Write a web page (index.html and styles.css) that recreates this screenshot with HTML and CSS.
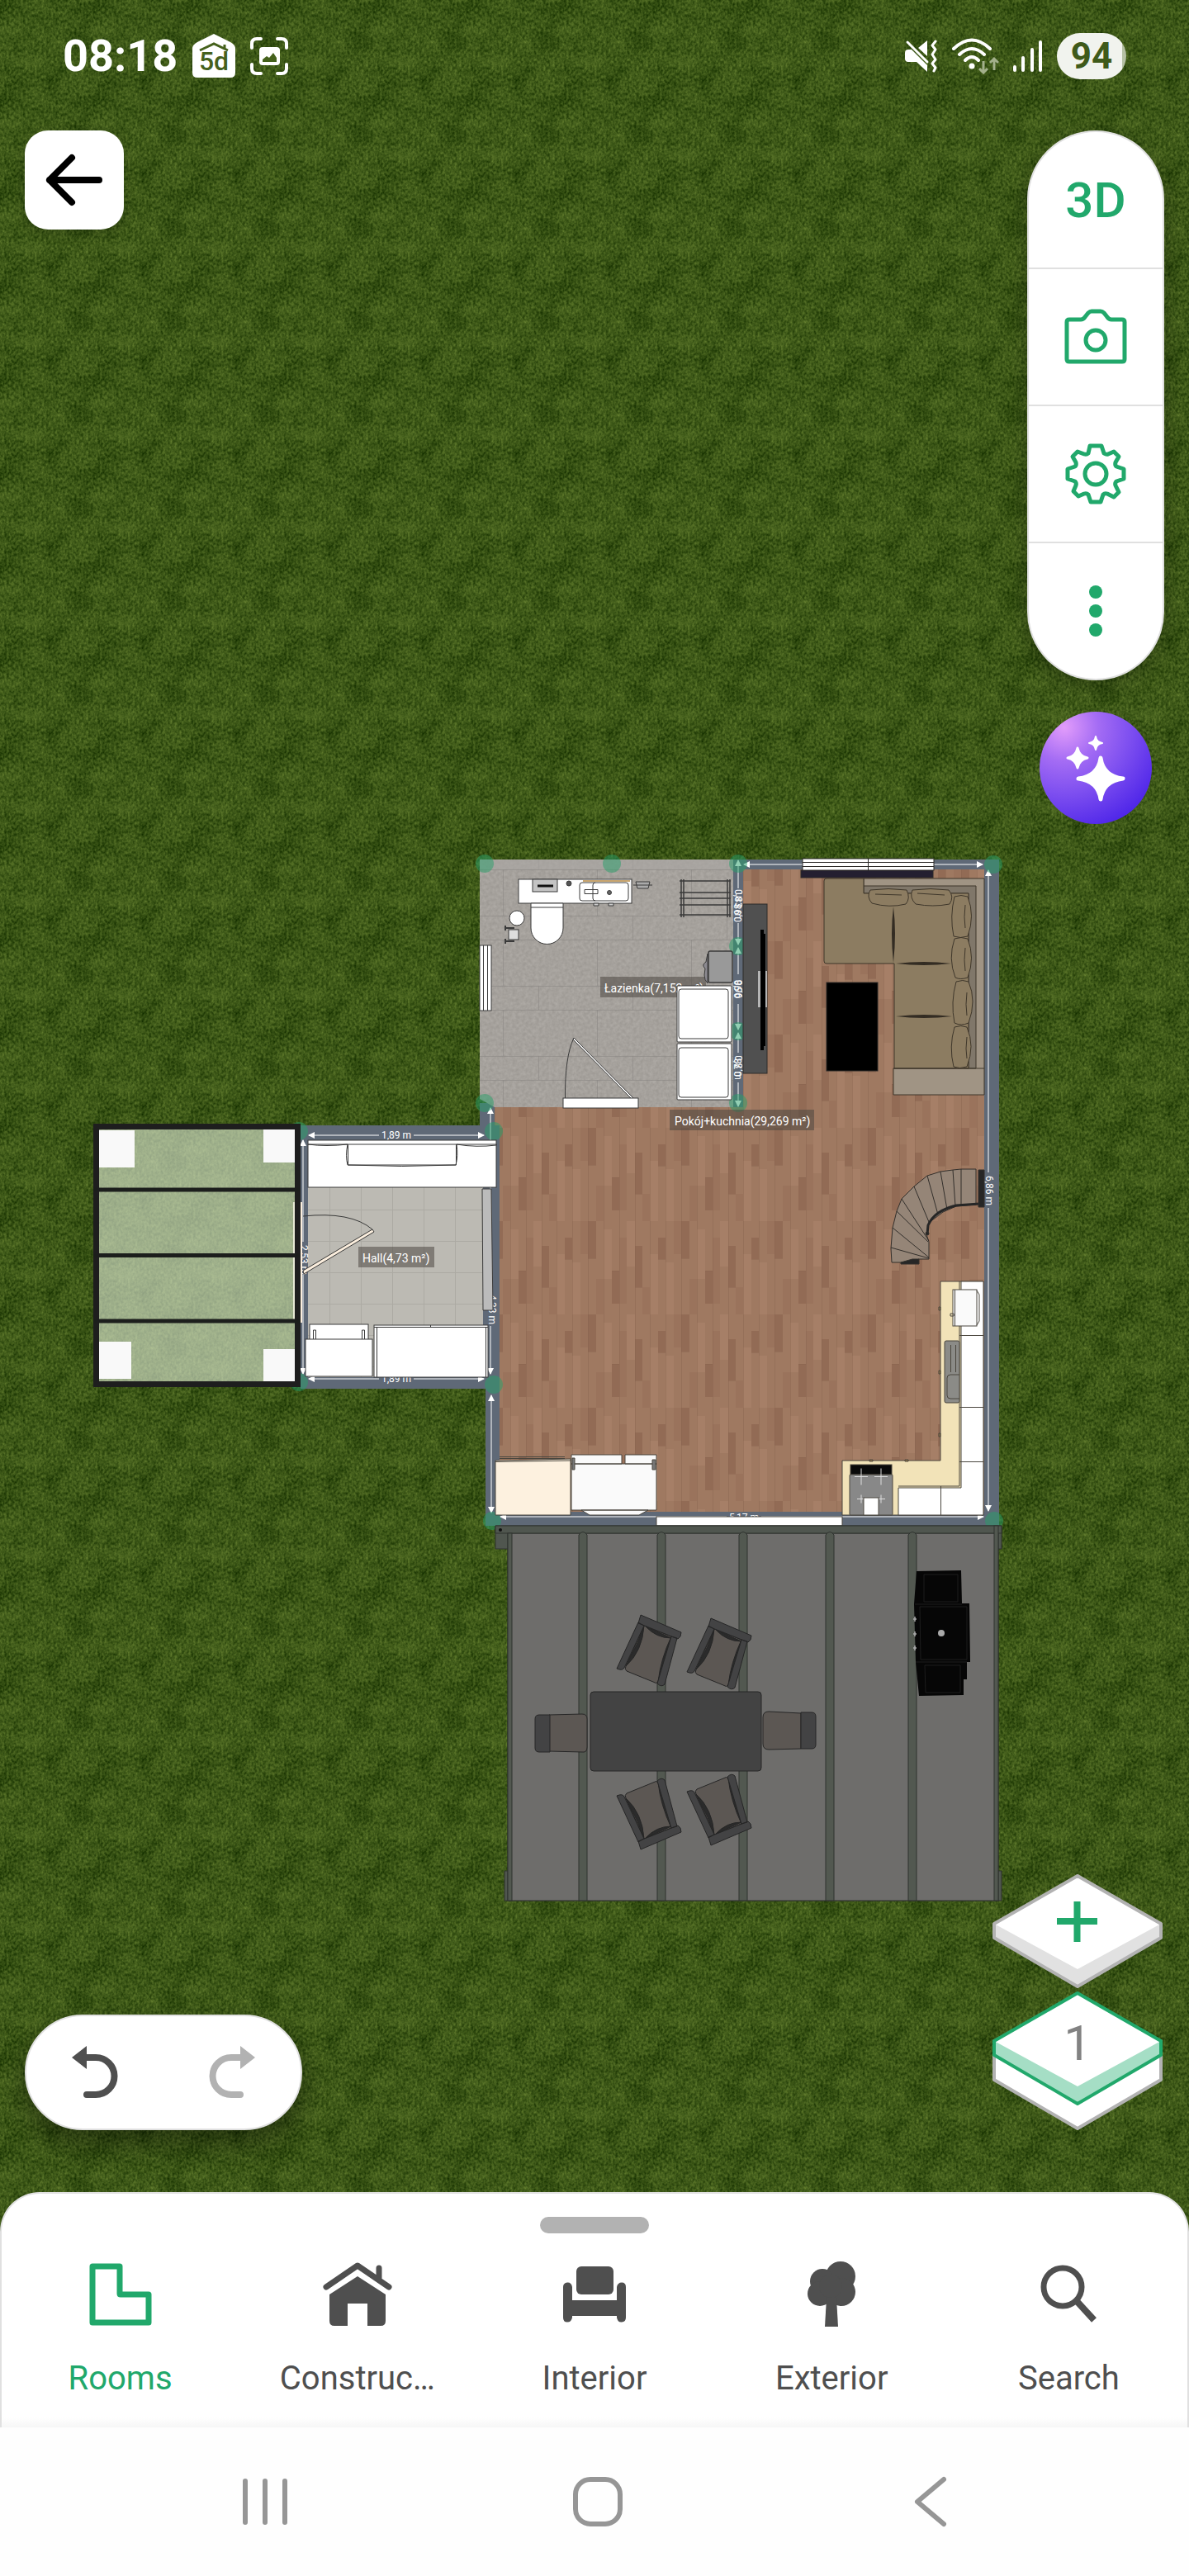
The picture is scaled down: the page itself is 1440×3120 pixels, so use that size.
FILE: index.html
```html
<!DOCTYPE html>
<html lang="en">
<head>
  <meta charset="UTF-8">
  <meta name="viewport" content="width=device-width, initial-scale=1.0">
  <title>Floor plan editor</title>
  <link rel="stylesheet" href="styles.css">
</head>
<body>

  <main class="editor">
    <svg class="plan" viewBox="0 0 1440 2703" preserveAspectRatio="xMidYMin slice" xmlns="http://www.w3.org/2000/svg">
      <defs>
        <filter id="grassNoise" x="0" y="0" width="100%" height="100%" color-interpolation-filters="sRGB">
          <feTurbulence type="fractalNoise" baseFrequency="0.35 0.28" numOctaves="2" seed="4" stitchTiles="stitch"/>
          <feColorMatrix values="1 0 0 0 0  1 0 0 0 0  1 0 0 0 0  0 0 0 0 1" result="fine"/>
          <feTurbulence type="fractalNoise" baseFrequency="0.036" numOctaves="3" seed="9" stitchTiles="stitch"/>
          <feColorMatrix values="1 0 0 0 0  1 0 0 0 0  1 0 0 0 0  0 0 0 0 1" result="coarse"/>
          <feComposite in="fine" in2="coarse" operator="arithmetic" k2="0.65" k3="0.35"/>
          <feColorMatrix values="0.5 0 0 0 -0.015  0.5 0 0 0 0.09  0.3 0 0 0 -0.06  0 0 0 0 1"/>
        </filter>
        <filter id="stoneNoise" x="0" y="0" width="100%" height="100%" color-interpolation-filters="sRGB">
          <feTurbulence type="fractalNoise" baseFrequency="0.25" numOctaves="2" seed="2"/>
          <feColorMatrix values="0.1 0 0 0 0.598  0.1 0 0 0 0.582  0.1 0 0 0 0.562  0 0 0 0 1"/>
        </filter>
        <pattern id="grass" width="113" height="113" patternUnits="userSpaceOnUse">
          <rect width="113" height="113" filter="url(#grassNoise)"/>
        </pattern>
        <pattern id="stone" x="581" y="1053" width="114" height="85" patternUnits="userSpaceOnUse">
          <rect width="114" height="85" filter="url(#stoneNoise)"/>
          <path d="M0 .5H114M0 56.5H114M28.5 0V56M71.5 56V85" stroke="#8c8884" stroke-width=".6" fill="none"/>
        </pattern>
        <pattern id="wood" x="6" y="10" width="113" height="113" patternUnits="userSpaceOnUse">
          <rect width="113" height="113" fill="#9f7961"/>
          <path d="M0 20h9v26H0zM28 0h10v45H28zM57 60h9v40h-9zM85 30h9v50h-9z" fill="#926b55"/>
          <path d="M9 50h10v63H9zM47 10h10v60H47zM75 0h10v55H75zM103 40h10v73h-10z" fill="#a67f67"/>
          <path d="M19 0h9v40h-9zM66 20h9v80h-9zM38 70h9v43h-9zM94 80h9v33h-9z" fill="#9a735c"/>
          <path d="M9.500 0V113M28.500 0V113M47.500 0V113M66.500 0V113M85.500 0V113M103.500 0V113M0 46.500H9M28 45.500H38M57 60.500H66M85 80.500H94" stroke="#84604c" stroke-width=".6" fill="none" opacity=".6"/>
        </pattern>
        <pattern id="tile" x="399" y="1465" width="38" height="38" patternUnits="userSpaceOnUse">
          <rect width="38" height="38" fill="#bcbab3"/>
          <path d="M0 .5H38M.5 0V38" stroke="#acaaa3" fill="none"/>
        </pattern>
        <marker id="arrow" viewBox="0 0 8 8" refX="7" refY="4" markerWidth="8" markerHeight="8" markerUnits="userSpaceOnUse" orient="auto-start-reverse">
          <path d="M0 0L8 4L0 8z" fill="#fff"/>
        </marker>
        <g id="chair">
          <path d="M780 1969L813 1982L797 2037Q795 2040 791 2037L759 2024Q756 2022 758 2018z" fill="#5c5753"/>
          <path d="M780 1969Q778 2000 758 2018L772 1990zM813 1982Q800 2010 797 2037L807 2010zM782 1970L813 1984Q795 1984 782 1970z" fill="#2b2b2b"/>
          <path d="M773 1965L780 1969L756 2020Q754 2024 747 2021zM813 1982L820 1984L805 2040Q801 2044 796 2039zM776 1956L825 1977Q825 1983 821 1985L773 1966z" fill="#434344"/>
        </g>
      </defs>

      <rect width="1440" height="2703" fill="url(#grass)"/>

      <!-- Walls -->
      <path d="M888 1041H1210V1848H588V1682H364V1363H581V1336H888z" fill="#5f6977"/>

      <!-- Floors -->
      <path d="M599 1341H900V1053H1192V1831H605V1363H599z" fill="url(#wood)"/>
      <path d="M581 1041H888V1341H599L581 1331z" fill="url(#stone)"/>
      <rect x="581" y="1041" width="307" height="12" fill="#aaa7a3" opacity=".6"/>
      <rect x="373" y="1382" width="212" height="286" fill="url(#tile)"/>
      <rect x="888" y="1053" width="12" height="288" fill="#5f6977"/>

      <!-- Dimensions -->
      <g class="dimension" marker-start="url(#arrow)" marker-end="url(#arrow)">
        <path d="M901 1047H1190"/>
        <path d="M1197 1054V1830"/>
        <path d="M594 1342V1664"/>
        <path d="M595 1690V1832"/>
        <path d="M606 1837H1191"/>
        <path d="M374 1375H586"/>
        <path d="M374 1670H586"/>
        <path d="M367 1381V1664"/>
        <path d="M894 1042V1144"/>
        <path d="M894 1148V1247"/>
        <path d="M894 1251V1340"/>
      </g>
      <g fill="#5f6977">
        <rect x="459" y="1369" width="42" height="11"/>
        <rect x="459" y="1669" width="42" height="6"/>
        <rect x="1192" y="1420" width="12" height="43"/>
        <rect x="362" y="1504" width="10" height="40"/>
        <rect x="590" y="1568" width="11" height="38"/>
        <rect x="889" y="1076" width="10" height="42"/>
        <rect x="889" y="1180" width="10" height="36"/>
        <rect x="889" y="1275" width="10" height="36"/>
        <rect x="880" y="1832" width="42" height="5"/>
      </g>
      <g class="dimension-text">
        <text x="480" y="1379">1,89 m</text>
        <text x="480" y="1674">1,89 m</text>
        <text x="901" y="1842">5,17 m</text>
        <text transform="translate(1194 1442) rotate(90)">6,86 m</text>
        <text transform="translate(364 1526) rotate(90)">2,53 m</text>
        <text transform="translate(592 1586) rotate(90)">4,33 m</text>
        <text transform="translate(890 1095) rotate(90)">0,83 m</text>
        <text transform="translate(898 1099) rotate(-90)">0,98 m</text>
        <text transform="translate(890 1198) rotate(90)">0,96</text>
        <text transform="translate(898 1198) rotate(-90)">0,98</text>
        <text transform="translate(890 1293) rotate(90)">0,8 m</text>
        <text transform="translate(898 1293) rotate(-90)">0,78</text>
      </g>

      <!-- Corner handles -->
      <g fill="#28a06a" opacity=".5">
        <circle cx="587" cy="1046" r="11"/>
        <circle cx="741" cy="1046" r="11"/>
        <circle cx="894" cy="1046" r="11"/>
        <circle cx="894" cy="1146" r="11"/>
        <circle cx="894" cy="1249" r="11"/>
        <circle cx="894" cy="1336" r="11"/>
        <circle cx="587" cy="1336" r="11"/>
        <circle cx="598" cy="1370" r="11"/>
        <circle cx="1203" cy="1047" r="11"/>
        <circle cx="1204" cy="1842" r="11"/>
        <circle cx="596" cy="1842" r="11"/>
        <circle cx="362" cy="1370" r="11"/>
        <circle cx="362" cy="1674" r="11"/>
        <circle cx="598" cy="1677" r="11"/>
      </g>

      <!-- Room names -->
      <g fill="#4d4742" opacity=".55">
        <rect x="727" y="1183" width="128" height="25"/>
        <rect x="811" y="1344" width="175" height="25"/>
        <rect x="434" y="1510" width="92" height="25"/>
      </g>
      <g class="room-name">
        <text x="732" y="1202">Łazienka(7,152 m²)</text>
        <text x="817" y="1363">Pokój+kuchnia(29,269 m²)</text>
        <text x="439" y="1529">Hall(4,73 m²)</text>
      </g>

      <!-- Bathroom -->
      <g stroke="#3a3a3a" fill="#fff">
        <rect x="628" y="1065" width="137" height="29"/>
        <rect x="645" y="1065" width="30" height="15" fill="#c4c4c4"/>
        <path d="M651 1073H670" stroke="#111" stroke-width="3"/>
        <rect x="702" y="1069" width="59" height="22" rx="3"/>
        <path d="M721 1069q-3 0-3 3v16q0 3 3 3M708 1077.500h16v5h-16z" fill="none"/>
        <circle cx="738" cy="1081" r="2.500" fill="#666"/>
        <circle cx="689" cy="1070" r="3" fill="#555"/>
        <rect x="706" y="1066" width="57" height="2" fill="#c8a56e" stroke="none"/>
        <path d="M719 1094h6v3h-6zM737 1094h6v3h-6z" fill="#ccc"/>
        <path d="M643 1094h39v30a19.500 19.500 0 0 1-39 0z"/>
        <path d="M643 1099H682"/>
        <circle cx="626" cy="1112" r="9"/>
        <path d="M612 1121v6m0-3h11M612 1137v6m0-3h11" stroke-width="2"/>
        <rect x="616" y="1126" width="12" height="12" fill="#ddd"/>
        <path d="M767 1072H790M770 1068h17l-2 8h-13z" fill="#aaa"/>
        <path d="M823 1067H885M823 1081H885M823 1088H885M823 1096H885M823 1108H885M825 1065V1111M828 1065V1111M881 1065V1111M884 1065V1111" stroke-width="1.500"/>
        <path d="M857 1155l-2 10q-6 4-1 8l-1 8q0 6 4 10z" fill="#8c8a90"/>
        <rect x="858" y="1152" width="29" height="38" rx="2" fill="#999" stroke-width="1.500"/>
        <rect x="820" y="1194" width="66" height="68" rx="1"/>
        <rect x="822" y="1198" width="60" height="60" rx="3"/>
        <rect x="820" y="1264" width="66" height="68" rx="1"/>
        <rect x="822" y="1269" width="60" height="60" rx="3"/>
        <rect x="581" y="1145" width="14" height="79"/>
        <path d="M585.500 1145V1224M590.500 1145V1224"/>
        <path d="M684.500 1330Q684 1280 695 1257" fill="none"/>
        <path d="M695 1257L767 1330l-2 1L694 1259z"/>
        <rect x="682" y="1330" width="91" height="12"/>
      </g>

      <!-- Living room -->
      <g stroke="#2c2a28">
        <rect x="970" y="1054" width="160" height="9" fill="#241f30"/>
        <rect x="972" y="1040" width="159" height="14" fill="#fff"/>
        <path d="M972 1044.500H1131M972 1049.500H1131M1051.500 1040V1054"/>
        <rect x="900" y="1095" width="29" height="205" fill="#505050"/>
        <rect x="918" y="1176" width="11" height="44" fill="#b5b5b5" stroke="none"/>
        <path d="M921 1126h4v5h2v136h-2v5h-4z" fill="#000" stroke="none"/>
        <rect x="1001" y="1190" width="62" height="107" fill="#000"/>
        <g stroke="#3f372b">
          <path d="M1046 1064H1192V1326H1082V1294H1173V1082H1046z" fill="#a09484"/>
          <path d="M1046 1073H1182V1294H1173V1082H1046z" fill="#80776a"/>
          <path d="M1001 1064H1046V1082H1173V1294H1083V1167H1001q-3 0-3-3V1067q0-3 3-3z" fill="#8c7c61"/>
          <path d="M1082 1294H1192"/>
          <g fill="#8c7c61">
            <path d="M1054 1078q22-3 44 0q5 10-1 17q-20 5-41-1q-7-8-2-16z"/>
            <path d="M1105 1078q22-3 44 0q7 8 1 17q-20 4-41 0q-8-8-4-17z"/>
            <path d="M1156 1086q8-3 16 0q9 23 0 48q-9 3-17 0q-5-24 1-48z"/>
            <path d="M1156 1137q8-3 16 0q9 23 0 47q-9 3-15 0q-9-23-1-47z"/>
            <path d="M1158 1189q8-3 15 0q10 23 0 50q-9 4-17 0q-5-25 2-50z"/>
            <path d="M1156 1244q8-3 15 0q10 23 0 48q-9 3-16 0q-6-24 1-48z"/>
          </g>
          <path d="M1060 1083L1092 1084M1111 1082L1144 1084M1169 1096q-2 15 0 28M1169 1148q-2 15 0 28M1171 1202q-2 15 0 28M1171 1256q-2 15 0 26" fill="none"/>
        </g>
        <path d="M1082 1098q4 32 0 68q-4-36 0-68zM1085 1167q34-4 67 0q-33 4-67 0zM1085 1231q34-4 68 0q-34 4-68 0z" fill="#332c23" stroke="none"/>
      </g>

      <!-- Staircase -->
      <g stroke="#332f2b" fill="#958577">
        <path d="M1182 1416L1164 1416L1154 1417L1139 1419L1123 1424L1107 1437L1092 1452L1086 1467L1081 1487L1079 1512L1080 1529H1101L1113 1525H1125V1504L1122 1495L1125 1481L1142 1468L1158 1461L1182 1459z"/>
        <path d="M1164 1416V1460M1154 1417L1157 1461M1139 1419L1147 1465M1123 1424L1136 1471M1107 1437L1125 1480M1092 1452L1125 1503M1086 1467L1124 1504M1081 1487L1125 1523M1079 1511L1125 1524" fill="none"/>
        <path d="M1186 1458L1158 1460Q1132 1466 1124 1484L1123 1495" fill="none" stroke="#262626" stroke-width="3"/>
        <path d="M1185 1417h7v45h-7zM1091 1529l14-4h8v6h-22z" fill="#262626"/>
        <circle cx="1123" cy="1494" r="2" fill="#262626"/>
      </g>

      <!-- Kitchen -->
      <g stroke="#4a463e">
        <path d="M1139 1552H1191V1835H1020V1769H1139z" fill="#f2e3b8"/>
        <path d="M1164 1552H1191V1835H1088V1802H1164z" fill="#fff"/>
        <path d="M1162 1552V1800H1088M1162 1617.500H1191M1162 1704.500H1191M1162 1770.500H1191M1139.500 1800V1835" fill="none"/>
        <rect x="1154" y="1562" width="29" height="44" fill="#fafafa"/>
        <path d="M1183 1563l3 5v32l-3 5M1156.500 1562V1606M1151 1591h4v3h-4z" fill="none"/>
        <rect x="1144" y="1624" width="18" height="75" rx="2" fill="#8b8b87"/>
        <path d="M1151.500 1629V1662M1157.500 1629V1662M1162 1665h-11q-4 0-4 4v21q0 4 4 4h11" fill="none"/>
        <rect x="1030" y="1774" width="50" height="12" fill="#0a0a0a"/>
        <rect x="1029" y="1786" width="52" height="49" rx="1" fill="#888"/>
        <path d="M1035 1788.500h16m-8-10v20M1059 1788.500h16m-8-10v20M1038 1815.500h10m-5-5v10M1062 1815.500h10m-5-5v10" stroke="#ddd"/>
        <rect x="1046" y="1814" width="18" height="21" fill="#fff"/>
        <path d="M1137 1583h2v4h-2zM1137 1660h2v4h-2zM1137 1736h2v4h-2zM1053 1768h4v2h-4zM1096 1768h4v2h-4z" fill="#9b7a48"/>
        <path d="M605 1764.500H684M605 1766.500H684" fill="none"/>
        <path d="M600 1769L691 1767V1835H600z" fill="#fdf1df"/>
        <path d="M600 1770.500L691 1769" fill="none"/>
        <path d="M692 1762H753V1773H692zM757 1762H795V1773H757zM692 1773H795V1829H692zM704 1829H785L774 1835H714z" fill="#fafafa"/>
        <path d="M693 1766h3v14h-3zM790 1768h4v12h-4z" fill="#777"/>
        <rect x="795" y="1837" width="225" height="11" fill="#fff"/>
      </g>

      <!-- Hall -->
      <g stroke="#3a3a3a" fill="#fff">
        <rect x="373" y="1381" width="228" height="57"/>
        <path d="M373 1386H601V1387Q577 1390 553 1386Q555 1400 552 1411Q487 1414 421 1411Q418 1400 421 1386Q395 1389 373 1386"/>
        <path d="M421.500 1386V1411H552.500V1386" fill="none"/>
        <path d="M584 1440H595L597 1587H585z" fill="#bbb"/>
        <rect x="375" y="1604" width="71" height="19"/>
        <path d="M379.500 1611h3v12h-3zM438.500 1611h3v12h-3z"/>
        <rect x="370" y="1622" width="81" height="45"/>
        <rect x="453" y="1605" width="138" height="63"/>
        <path d="M456.500 1607V1668M588.500 1607V1668M453 1607.500H591M521.500 1605V1608"/>
        <path d="M367 1473Q425 1467 451 1489" fill="none"/>
        <rect x="355" y="1456" width="11" height="146" fill="#fbeedd" stroke="none"/>
        <path d="M367 1539L451 1489L453 1492L368 1543z" fill="#fbeedd"/>
      </g>

      <!-- Pergola -->
      <rect x="116" y="1364" width="245" height="313" fill="#dbe6d2" opacity=".62"/>
      <g fill="#f9f9f9">
        <rect x="120" y="1369" width="43" height="45"/>
        <rect x="319" y="1368" width="38" height="40"/>
        <rect x="120" y="1625" width="39" height="45"/>
        <rect x="319" y="1634" width="38" height="39"/>
      </g>
      <path d="M116.500 1361V1680M360.500 1361V1680M113 1364.500H364M113 1676.500H364" stroke="#1e1e1e" stroke-width="7" fill="none"/>
      <path d="M113 1441H364M113 1520.500H364M113 1600H364" stroke="#1c1e1c" stroke-width="5" fill="none"/>

      <!-- Terrace -->
      <g stroke="#2f332f">
        <path d="M600 1848H1213V1876H600z" fill="#50564f"/>
        <path d="M611 2266H1213V2302H611z" fill="#50564f"/>
        <rect x="615" y="1857" width="594" height="445" fill="#6e6d6b"/>
        <path d="M600 1848H1213V1857H600z" fill="#50564f"/>
        <g fill="#525850">
          <rect x="615" y="1857" width="5" height="445"/>
          <path d="M701 2302V1859q5-7 10 0V2302z"/>
          <path d="M796 2302V1859q5-7 10 0V2302z"/>
          <path d="M895 2302V1859q5-7 10 0V2302z"/>
          <path d="M1000 2302V1859q5-7 10 0V2302z"/>
          <path d="M1100 2302V1859q5-7 10 0V2302z"/>
          <rect x="1204" y="1848" width="5" height="454"/>
        </g>
      </g>
      <circle cx="606" cy="1853" r="2" fill="#111"/>
      <g stroke="#262626">
        <rect x="715" y="2049" width="207" height="96" rx="4" fill="#434343"/>
        <path d="M665 2077L705 2076q6 0 6 6v34q0 7-6 6L665 2121zM970 2075L931 2073q-7 0-7 7v32q0 7 7 7L970 2118z" fill="#5c5753"/>
        <path d="M666 2077H653q-5 0-5 5v35q0 5 5 5H666zM970 2074H983q5 0 5 5v34q0 5-5 5H970z" fill="#434344"/>
        <use href="#chair"/>
        <use href="#chair" transform="translate(85 4)"/>
        <use href="#chair" transform="translate(0 4196) scale(1 -1)"/>
        <use href="#chair" transform="translate(85 4191) scale(1 -1)"/>
      </g>
      <path d="M1110 1903L1164 1902L1165 1942H1174L1175 2013H1171V2034H1167V2053L1113 2054L1109 2013L1107 1943z" fill="#060606"/>
      <path d="M1108 1943H1165M1109 2013H1171M1114 1946H1171V2010H1115zM1119 1907H1160V1940H1119zM1120 2017H1163V2050H1121z" stroke="#1d1d1d" fill="none"/>
      <path d="M1106 1961h4m-2-3v6M1106 1979h4m-2-3v6M1106 1996h4m-2-3v6" stroke="#aaa" stroke-width="1.500"/>
      <circle cx="1140" cy="1978" r="4" fill="#aaa"/>
    </svg>

    <header class="status-bar">
      <div class="status-left">
        <span class="clock">08:18</span>
        <svg width="52" height="54" viewBox="0 0 52 54">
          <path d="M26 0L46 10Q52 13 52 18V47Q52 53 46 53H6Q0 53 0 47V18Q0 13 6 10z" fill="#fff"/>
          <path d="M9 20L26 12L43 20M39 19V13" stroke="#45611c" stroke-width="3" fill="none"/>
          <text class="badge-text" x="26" y="44">5d</text>
        </svg>
        <svg width="46" height="46" viewBox="0 0 46 46">
          <path d="M2 13V8q0-6 6-6h5M33 2h5q6 0 6 6v5M44 33v5q0 6-6 6h-5M13 44H8q-6 0-6-6v-5" stroke="#fff" stroke-width="4" stroke-linecap="round" fill="none"/>
          <rect x="11" y="12" width="25" height="22" rx="4" fill="#fff"/>
          <path d="M15 30V27l5-4 3 2 5-6 4 6v5z" fill="#45611c"/>
        </svg>
      </div>
      <div class="status-right">
        <svg width="40" height="40" viewBox="0 0 40 40">
          <path d="M4 12H8L27 31V39L14 27H4Q0 27 0 23V16Q0 12 4 12zM16 10L27 1V20z" fill="#fff"/>
          <path d="M3 3L27 27" stroke="#fff" stroke-width="3" stroke-linecap="round"/>
          <path d="M37 2l-4 5 4 5-4 6 4 6-4 5 4 5-2 4" stroke="#fff" stroke-width="3" stroke-linecap="round" stroke-linejoin="round" fill="none"/>
        </svg>
        <svg width="58" height="44" viewBox="0 0 58 44">
          <path d="M3 13Q25-8 47 13M10 20Q25 6 40 20M17 27Q25 19 33 27" stroke="#fff" stroke-width="4" stroke-linecap="round" fill="none"/>
          <circle cx="25" cy="34" r="3.500" fill="#fff"/>
          <path d="M39 28V42M34 37l5 5 5-5M52 39V25M47 30l5-5 5 5" stroke="#a3b08b" stroke-width="3" fill="none"/>
        </svg>
        <svg width="38" height="40" viewBox="0 0 38 40">
          <path d="M3 33V37M13 22V37M24 12V37M34 3V37" stroke="#fff" stroke-width="4" stroke-linecap="round"/>
        </svg>
        <span class="battery">94</span>
      </div>
    </header>

    <div class="top-controls">
      <button class="back-button" aria-label="Back">
        <svg width="72" height="64" viewBox="0 0 72 64">
          <path d="M66 32H6M33 5L6 32L33 59" stroke="#000" stroke-width="8" stroke-linecap="round" stroke-linejoin="round" fill="none"/>
        </svg>
      </button>

      <div class="side-controls">
        <div class="toolbar">
          <button class="view-button">3D</button>
          <button aria-label="Take a photo">
            <svg width="76" height="68" viewBox="0 0 76 68">
              <path d="M6 13H20Q23 13 25 10L29 5Q31 3 33 3H44Q46 3 48 5L52 10Q54 13 57 13H70Q73 13 73 16V61Q73 64 70 64H6Q3 64 3 61V16Q3 13 6 13z" stroke="#21a86b" stroke-width="5" fill="none"/>
              <circle cx="38" cy="38" r="12" stroke="#21a86b" stroke-width="5" fill="none"/>
            </svg>
          </button>
          <button aria-label="Settings">
            <svg width="76" height="76" viewBox="0 0 76 76">
              <path d="M31 4H45L48 13Q51 15 53 14L60 11L66 17L62 24Q61 27 63 29L72 32V44L63 47Q61 49 62 52L66 60L60 66L52 62Q49 61 47 63L44 72H32L29 63Q27 61 24 62L17 65L11 59L14 52Q15 49 13 47L4 44V32L13 29Q15 27 14 24L10 17L16 11L24 14Q27 15 29 13z" stroke="#21a86b" stroke-width="5" stroke-linejoin="round" fill="none"/>
              <circle cx="38" cy="38" r="13" stroke="#21a86b" stroke-width="5" fill="none"/>
            </svg>
          </button>
          <button aria-label="More options">
            <svg width="16" height="62" viewBox="0 0 16 62" fill="#21a86b">
              <circle cx="8" cy="8" r="8"/>
              <circle cx="8" cy="31" r="8"/>
              <circle cx="8" cy="54" r="8"/>
            </svg>
          </button>
        </div>
        <button class="magic-button" aria-label="AI tools">
          <svg width="136" height="136" viewBox="0 0 136 136" fill="#fff" stroke="#fff" stroke-linejoin="round">
            <path d="M74 56Q77 78 101 81Q77 84 74 106Q71 84 47 81Q71 78 74 56z" stroke-width="5"/>
            <path d="M46 44Q48 54 58 56Q48 58 46 68Q44 58 34 56Q44 54 46 44z" stroke-width="3"/>
            <path d="M68 30Q69 37 76 38Q69 39 68 46Q67 39 60 38Q67 37 68 30z" stroke-width="2"/>
          </svg>
        </button>
      </div>
    </div>

    <div class="bottom-controls">
      <div class="history">
        <button aria-label="Undo">
          <svg width="56" height="64" viewBox="0 0 56 64">
            <path d="M0 14L18 0V28z" fill="#4f4f4f"/>
            <path d="M16 14H29A22 22 0 0 1 29 59H18" stroke="#4f4f4f" stroke-width="8" stroke-linecap="round" fill="none"/>
          </svg>
        </button>
        <button aria-label="Redo" disabled>
          <svg width="56" height="64" viewBox="0 0 56 64">
            <path d="M56 14L38 0V28z" fill="#b2b2b2"/>
            <path d="M40 14H27A22 22 0 0 0 27 59H38" stroke="#b2b2b2" stroke-width="8" stroke-linecap="round" fill="none"/>
          </svg>
        </button>
      </div>

      <div class="floors">
        <button aria-label="Add floor">
          <svg width="206" height="138" viewBox="0 0 206 138">
            <path d="M103 2L204 60V77L103 136L2 77V60z" fill="#e1e1e1"/>
            <path d="M103 2L204 60L103 115L2 60z" fill="#fff"/>
            <path d="M103 2L204 60V77L103 136L2 77V60z" fill="none" stroke="#b2b2b2" stroke-width="4" stroke-linejoin="round"/>
            <path d="M78 57H127M102.500 33V82" stroke="#21a86b" stroke-width="8"/>
          </svg>
        </button>
        <button aria-label="Floor 1">
          <svg width="206" height="168" viewBox="0 0 206 168">
            <path d="M2 60V107L103 166L204 107V60z" fill="#fff" stroke="#b2b2b2" stroke-width="4" stroke-linejoin="round"/>
            <path d="M103 2L204 60V77L103 136L2 77V60z" fill="#a5dec5"/>
            <path d="M103 2L204 60L103 115L2 60z" fill="#fff"/>
            <path d="M103 2L204 60V77L103 136L2 77V60z" fill="none" stroke="#21a86b" stroke-width="4" stroke-linejoin="round"/>
            <text class="floor-number" x="103" y="83">1</text>
          </svg>
        </button>
      </div>
    </div>
  </main>

  <nav class="catalog">
    <div class="handle"></div>
    <div class="tabs">
      <button class="tab active">
        <svg width="80" height="80" viewBox="0 0 80 80">
          <path d="M6 6H39V39Q39 40 40 40H74V74H6z" stroke="#21a86b" stroke-width="7" stroke-linejoin="round" fill="none"/>
        </svg>
        <span>Rooms</span>
      </button>
      <button class="tab">
        <svg width="84" height="80" viewBox="0 0 84 80">
          <path d="M4 31L42 5L80 31M68 8V22" stroke="#4f4f4f" stroke-width="7" stroke-linecap="round" stroke-linejoin="round" fill="none"/>
          <path d="M42 18L76 40V72Q76 78 70 78H54V51H30V78H14Q8 78 8 72V40z" fill="#4f4f4f"/>
        </svg>
        <span>Construc…</span>
      </button>
      <button class="tab">
        <svg width="80" height="80" viewBox="0 0 80 80" fill="#4f4f4f">
          <rect x="18" y="6" width="45" height="34" rx="6"/>
          <path d="M2 31q0-5 5-5.500t6 5.500V47H67V31q1-5.500 6-5.500t5 5.500V68q0 5-5 5.500T67 68V66H13V68q-1 5.500-6 5.500T2 68z"/>
        </svg>
        <span>Interior</span>
      </button>
      <button class="tab">
        <svg width="80" height="80" viewBox="0 0 80 80" fill="#4f4f4f">
          <circle cx="51" cy="18" r="18"/>
          <circle cx="29" cy="24" r="15"/>
          <circle cx="26" cy="39" r="15"/>
          <circle cx="52" cy="37" r="17"/>
          <circle cx="39" cy="30" r="14"/>
          <path d="M34 44H46L48 79H32z"/>
        </svg>
        <span>Exterior</span>
      </button>
      <button class="tab">
        <svg width="80" height="80" viewBox="0 0 80 80">
          <circle cx="33" cy="31" r="23" stroke="#4f4f4f" stroke-width="7" fill="none"/>
          <path d="M49 47L71 71" stroke="#4f4f4f" stroke-width="8"/>
        </svg>
        <span>Search</span>
      </button>
    </div>
  </nav>

  <footer class="system-nav">
    <button aria-label="Recent apps">
      <svg width="56" height="60" viewBox="0 0 56 60">
        <path d="M4 5V55M28 5V55M52 5V55" stroke="#969696" stroke-width="6" stroke-linecap="round"/>
      </svg>
    </button>
    <button aria-label="Home">
      <svg width="62" height="62" viewBox="0 0 62 62">
        <rect x="4" y="4" width="54" height="54" rx="18" stroke="#969696" stroke-width="6" fill="none"/>
      </svg>
    </button>
    <button aria-label="Go back">
      <svg width="42" height="62" viewBox="0 0 42 62">
        <path d="M37 4L5 31L37 58" stroke="#969696" stroke-width="6" stroke-linecap="round" stroke-linejoin="round" fill="none"/>
      </svg>
    </button>
  </footer>

</body>
</html>
```
FILE: styles.css
```css
body {
  display: flex;
  flex-direction: column;
  min-height: 100vh;
  margin: 0;
  background-color: #fefefe;
  font-family: Roboto, "Liberation Sans", sans-serif;
}
button {
  display: flex;
  align-items: center;
  justify-content: center;
  padding: 0;
  border: none;
  background: none;
  font-family: inherit;
}
svg {
  display: block;
}

/* Plan area */
.editor {
  position: relative;
  flex: 1;
  display: flex;
  flex-direction: column;
  background-color: #3d5919;
}
.plan {
  position: absolute;
  top: 0;
  left: 0;
  width: 100%;
  height: 100%;
}
.dimension {
  stroke: #fff;
  stroke-width: 1;
  fill: none;
}
.dimension-text {
  fill: #fff;
  font-size: 12px;
  text-anchor: middle;
}
.room-name {
  fill: #fff;
  font-size: 14px;
}

/* Status bar */
.status-bar {
  position: relative;
  display: flex;
  justify-content: space-between;
  padding: 40px 76px 0;
  color: #fff;
}
.status-left, .status-right {
  display: flex;
  align-items: center;
  height: 56px;
  gap: 16px;
}
.status-left {
  gap: 18px;
}
.clock {
  font-size: 54px;
  line-height: 56px;
  font-weight: 700;
}
.badge-text {
  fill: #45611c;
  font-size: 32px;
  font-weight: 500;
  text-anchor: middle;
}
.battery {
  width: 84px;
  border-radius: 28px;
  background: linear-gradient(to right, #f1f3ee 94%, #b5c0a4 94%);
  color: #3f5a1a;
  font-size: 44px;
  line-height: 56px;
  font-weight: 700;
  text-align: center;
}

/* Controls over the plan */
.top-controls {
  position: relative;
  display: flex;
  justify-content: space-between;
  align-items: flex-start;
  padding: 62px 30px 0;
}
.back-button {
  width: 120px;
  height: 120px;
  border-radius: 28px;
  background-color: #fff;
  box-shadow: 0 4px 16px rgba(0, 0, 0, 0.2);
}
.side-controls {
  display: flex;
  flex-direction: column;
  align-items: center;
  gap: 38px;
}
.toolbar {
  width: 162px;
  border: 2px solid #e0e0e0;
  border-radius: 83px;
  background-color: #fff;
  box-shadow: 0 8px 24px rgba(0, 0, 0, 0.25);
}
.toolbar button {
  width: 100%;
  height: 164px;
}
.toolbar button + button {
  border-top: 2px solid #e0e0e0;
  height: 166px;
}
.toolbar .view-button {
  color: #21a86b;
  font-size: 60px;
  font-weight: 500;
}
.magic-button {
  width: 136px;
  height: 136px;
  border-radius: 50%;
  background: radial-gradient(circle at 22% 14%, #e29cfb 0%, #a46cf4 26%, #7f50f0 50%, #4a22e8 85%);
}
.bottom-controls {
  position: relative;
  display: flex;
  justify-content: space-between;
  align-items: flex-end;
  margin-top: auto;
  padding: 0 32px 123px 30px;
}
.history {
  display: flex;
  width: 332px;
  height: 136px;
  border: 2px solid #e0e0e0;
  border-radius: 70px;
  background-color: #fff;
  box-shadow: 0 16px 32px rgba(0, 0, 0, 0.4);
}
.history button {
  flex: 1;
}
.floors {
  display: flex;
  flex-direction: column;
  gap: 4px;
}
.floor-number {
  fill: #828282;
  font-size: 60px;
  text-anchor: middle;
}

/* Catalog sheet */
.catalog {
  position: relative;
  margin-top: -48px;
  padding: 28px 0 35px;
  border: 2px solid #e0e0e0;
  border-bottom: none;
  border-radius: 48px 48px 0 0;
  background: linear-gradient(to top, #f6f6f6, #fff 12px);
}
.handle {
  width: 132px;
  height: 20px;
  margin: 0 auto 34px;
  border-radius: 10px;
  background-color: #b2b2b2;
}
.tabs {
  display: grid;
  grid-template-columns: repeat(5, 1fr);
}
.tab {
  flex-direction: column;
  gap: 38px;
  color: #4f4f4f;
  font-size: 40px;
  line-height: 48px;
}
.tab.active {
  color: #21a86b;
}

/* System navigation */
.system-nav {
  display: grid;
  grid-template-columns: repeat(3, 1fr);
  height: 180px;
  padding: 0 112px 0 120px;
}
.system-nav button {
  height: 180px;
}
```
